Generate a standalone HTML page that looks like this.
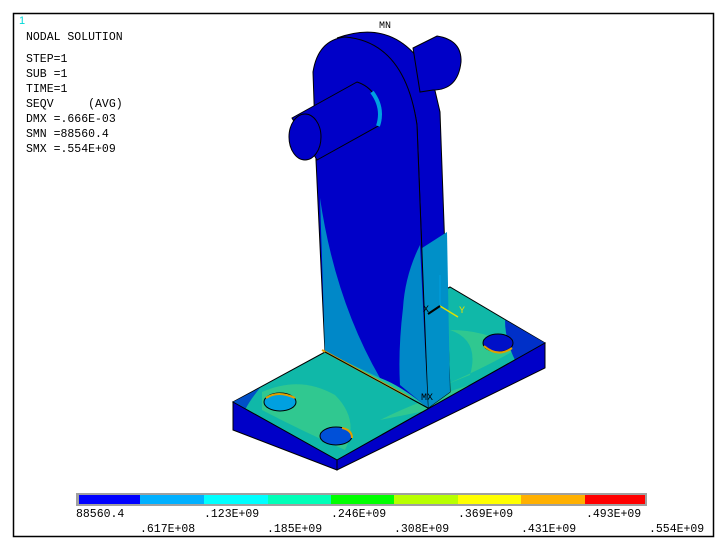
<!DOCTYPE html>
<html><head><meta charset="utf-8"><style>
html,body{margin:0;padding:0;background:#fff;width:724px;height:551px;overflow:hidden}
.t{font-family:"Liberation Mono",monospace;font-size:11.5px;fill:#000}
</style></head><body>
<svg width="724" height="551" viewBox="0 0 724 551" xmlns="http://www.w3.org/2000/svg">
<rect x="13.5" y="13.5" width="700" height="523" fill="#fff" stroke="#000" stroke-width="1.5"/>
<text x="19" y="24" style="font-family:'Liberation Sans',sans-serif;font-size:11px" fill="#00d8d8">1</text>
<g class="t">
<text x="26" y="40">NODAL SOLUTION</text>
<text x="26" y="62">STEP=1</text>
<text x="26" y="77">SUB =1</text>
<text x="26" y="92">TIME=1</text>
<text x="26" y="107">SEQV&#160;&#160;&#160;&#160;&#160;(AVG)</text>
<text x="26" y="122">DMX =.666E-03</text>
<text x="26" y="137">SMN =88560.4</text>
<text x="26" y="152">SMX =.554E+09</text>
</g>
<!-- base top -->
<polygon points="233,402 325,352 450,287 545,343 337,460" fill="#10b8a8" stroke="#000" stroke-width="1"/>
<path d="M262,392 Q300,375 335,395 Q360,420 345,450 Q300,430 262,410Z" fill="#30c890"/>
<path d="M380,420 Q420,400 470,385 L430,410Z" fill="#30c890"/>
<path d="M450,330 Q480,340 470,375 L445,385 Q490,365 515,350 Q490,330 450,330Z" fill="#30c890"/>
<path d="M505,320 L545,343 L515,360 Q505,340 505,320Z" fill="#0030c8"/>
<path d="M233,402 L260,388 Q250,400 245,410Z" fill="#0050c8"/>
<polygon points="233,402 337,460 337,470 233,430" fill="#0000c8" stroke="#000" stroke-width="1"/>
<polygon points="337,460 545,343 545,368 337,470" fill="#0000c8" stroke="#000" stroke-width="1"/>
<ellipse cx="280" cy="402" rx="16" ry="9" fill="#00a0e0" stroke="#000"/>
<path d="M266,398 Q278,390 295,398" stroke="#e0a000" stroke-width="2" fill="none"/>
<ellipse cx="336" cy="436" rx="16" ry="9" fill="#0050d8" stroke="#000"/>
<path d="M342,428 Q352,430 352,438" stroke="#e0a000" stroke-width="2" fill="none"/>
<ellipse cx="498" cy="343" rx="15" ry="9" fill="#0010c8" stroke="#000"/>
<path d="M484,346 Q498,358 512,348" stroke="#e0a000" stroke-width="2" fill="none"/>
<!-- upright side face -->
<path d="M337,38 Q400,15 433,82 L440,112 L450,392 L428,408 L417,125 Q405,45 345,37Z" fill="#0000c8" stroke="#000"/>
<polygon points="419,250 447,232 450,392 428,408" fill="#0090c8"/>
<!-- right pin -->
<path d="M413,48 L437,36 Q462,40 461,62 Q458,90 433,90 L420,92Z" fill="#0000c8" stroke="#000"/>
<!-- upright front face -->
<path d="M316,160 L313,72 Q318,40 345,37 Q405,42 417,125 L428,408 L325,352Z" fill="#0000c8" stroke="#000"/>
<path d="M320,198 Q335,300 380,378 L400,388 L428,408 L325,352Z" fill="#0088c8"/>
<path d="M420,245 Q405,275 403,308 Q398,350 400,385 L428,408Z" fill="#0088c8"/>
<path d="M325,352 L428,408 Q400,385 380,378Z" fill="#20c0a0"/>
<path d="M322,350 L410,398" stroke="#e0a000" stroke-width="2"/>
<path d="M325,352 L428,408" stroke="#000" stroke-width="1"/>
<!-- left pin -->
<path d="M292,118 L357,82 Q382,90 380,125 L317,160Z" fill="#0000c8" stroke="#000"/>
<ellipse cx="305" cy="137" rx="16" ry="23" fill="#0000c8" stroke="#000"/>
<path d="M372,92 Q384,108 378,126" stroke="#00a0e0" stroke-width="4" fill="none"/>
<text x="379" y="28" class="t" style="font-size:10px">MN</text>
<text x="421" y="400" class="t" style="font-size:10px">MX</text>
<!-- triad -->
<line x1="440" y1="306" x2="440" y2="275" stroke="#00a0e0"/>
<line x1="440" y1="306" x2="458" y2="317" stroke="#e0e000" stroke-width="1.5"/>
<line x1="440" y1="306" x2="428" y2="314" stroke="#000" stroke-width="2"/>
<text x="459" y="313" class="t" style="font-size:10px;fill:#e0e000">Y</text>
<text x="423" y="312" class="t" style="font-size:10px">X</text>
<!-- legend -->
<rect x="76" y="493" width="571" height="13" fill="#a0a0a0"/>
<g>
<rect x="79" y="495" width="61" height="9" fill="#0000ff"/>
<rect x="140" y="495" width="64" height="9" fill="#00b0ff"/>
<rect x="204" y="495" width="64" height="9" fill="#00ffff"/>
<rect x="268" y="495" width="63" height="9" fill="#00ffb8"/>
<rect x="331" y="495" width="63" height="9" fill="#00ff00"/>
<rect x="394" y="495" width="64" height="9" fill="#b8ff00"/>
<rect x="458" y="495" width="63" height="9" fill="#ffff00"/>
<rect x="521" y="495" width="64" height="9" fill="#ffb000"/>
<rect x="585" y="495" width="60" height="9" fill="#ff0000"/>
</g>
<g class="t">
<text x="76" y="517">88560.4</text>
<text x="204" y="517">.123E+09</text>
<text x="331" y="517">.246E+09</text>
<text x="458" y="517">.369E+09</text>
<text x="586" y="517">.493E+09</text>
<text x="140" y="532">.617E+08</text>
<text x="267" y="532">.185E+09</text>
<text x="394" y="532">.308E+09</text>
<text x="521" y="532">.431E+09</text>
<text x="649" y="532">.554E+09</text>
</g>
</svg>
</body></html>
